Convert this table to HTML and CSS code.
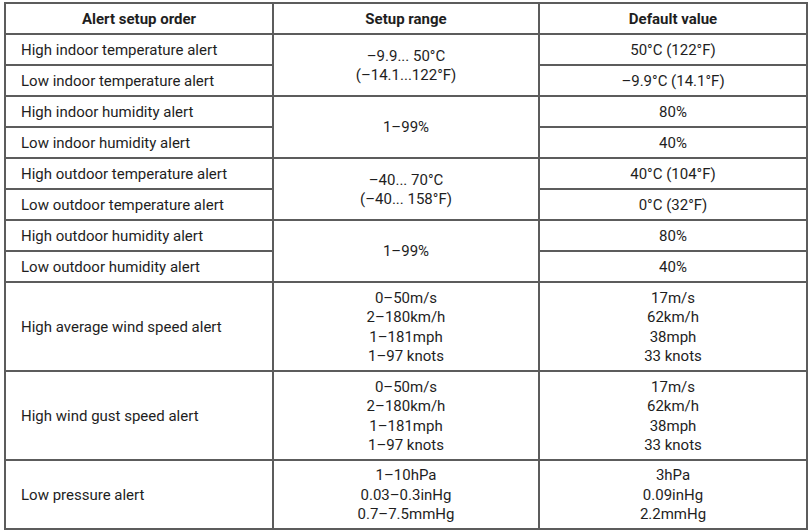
FILE: index.html
```html
<!DOCTYPE html>
<html>
<head>
<meta charset="utf-8">
<link rel="stylesheet" href="styles.css">
</head>
<body>
<table class="alerts">
  <colgroup><col class="c1"><col class="c2"><col class="c3"></colgroup>
  <thead>
    <tr class="hd"><th>Alert setup order</th><th>Setup range</th><th>Default value</th></tr>
  </thead>
  <tbody>
    <tr class="r"><td class="name">High indoor temperature alert</td><td rowspan="2">–9.9... 50°C<br>(–14.1...122°F)</td><td>50°C (122°F)</td></tr>
    <tr class="r"><td class="name">Low indoor temperature alert</td><td>–9.9°C (14.1°F)</td></tr>
    <tr class="r"><td class="name">High indoor humidity alert</td><td rowspan="2">1–99%</td><td>80%</td></tr>
    <tr class="r"><td class="name">Low indoor humidity alert</td><td>40%</td></tr>
    <tr class="r"><td class="name">High outdoor temperature alert</td><td rowspan="2">–40... 70°C<br>(–40... 158°F)</td><td>40°C (104°F)</td></tr>
    <tr class="r"><td class="name">Low outdoor temperature alert</td><td>0°C (32°F)</td></tr>
    <tr class="r"><td class="name">High outdoor humidity alert</td><td rowspan="2">1–99%</td><td>80%</td></tr>
    <tr class="r"><td class="name">Low outdoor humidity alert</td><td>40%</td></tr>
    <tr class="big"><td class="name">High average wind speed alert</td><td>0–50m/s<br>2–180km/h<br>1–181mph<br>1–97 knots</td><td>17m/s<br>62km/h<br>38mph<br>33 knots</td></tr>
    <tr class="big"><td class="name">High wind gust speed alert</td><td>0–50m/s<br>2–180km/h<br>1–181mph<br>1–97 knots</td><td>17m/s<br>62km/h<br>38mph<br>33 knots</td></tr>
    <tr class="mid"><td class="name">Low pressure alert</td><td>1–10hPa<br>0.03–0.3inHg<br>0.7–7.5mmHg</td><td>3hPa<br>0.09inHg<br>2.2mmHg</td></tr>
  </tbody>
</table>
</body>
</html>
```
FILE: styles.css
```css
html, body {
  margin: 0;
  padding: 0;
  background: #ffffff;
}
body {
  padding: 2px 0 0 4px;
  font-family: Roboto, "Liberation Sans", sans-serif;
  font-size: 15px;
  color: #1e1e1e;
}
.alerts {
  border-collapse: collapse;
  table-layout: fixed;
  width: 802px;
}
.c1 { width: 268px; }
.c2 { width: 266px; }
.c3 { width: 268px; }
.alerts th, .alerts td {
  border: 2px solid #5c5c5c;
  padding: 2px 0 0 0;
  text-align: center;
  vertical-align: middle;
  line-height: 19.5px;
}
.alerts th {
  font-weight: 700;
  height: 27px;
}
.alerts td.name {
  text-align: left;
  padding-left: 15px;
}
.r td { height: 27px; }
.big td { height: 85px; }
.mid td { height: 65px; }
```
